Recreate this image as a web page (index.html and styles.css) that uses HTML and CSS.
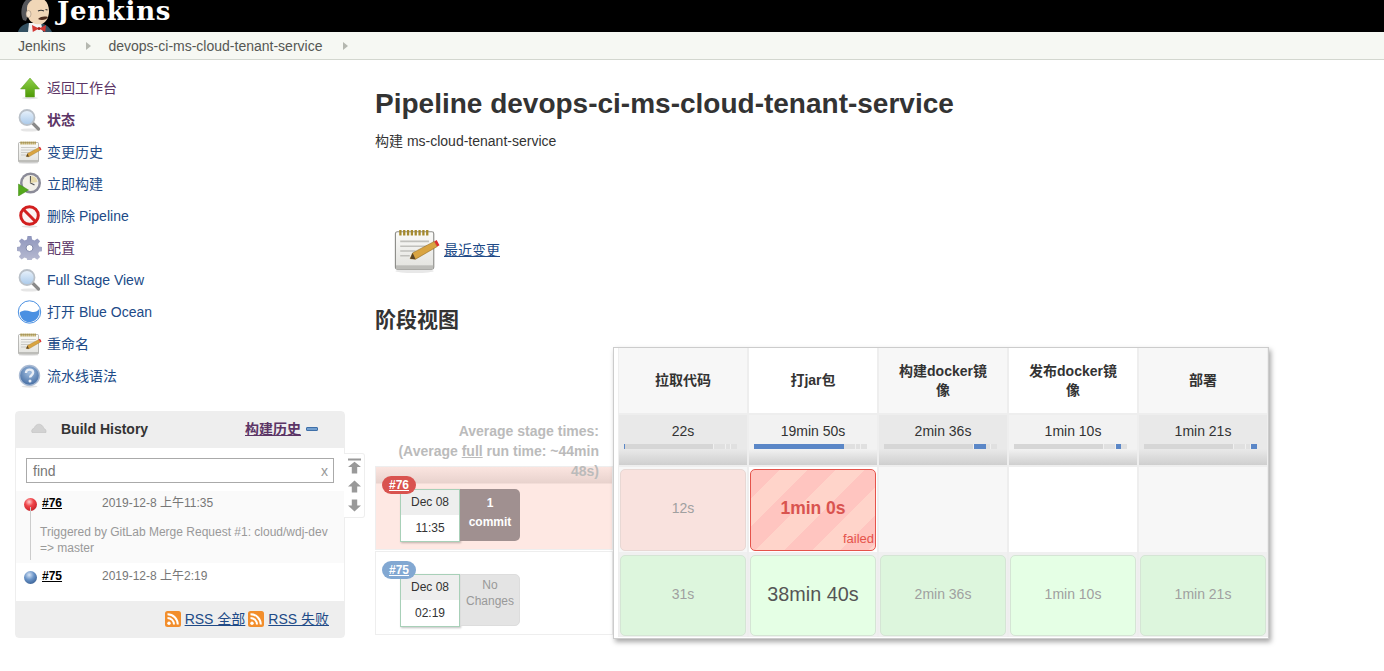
FILE: index.html
```html
<!DOCTYPE html>
<html lang="zh">
<head>
<meta charset="utf-8">
<title>devops-ci-ms-cloud-tenant-service [Jenkins]</title>
<link rel="stylesheet" href="styles.css">
</head>
<body>
<svg class="defs" width="0" height="0" aria-hidden="true">
  <defs>
    <linearGradient id="lensG" x1="0" y1="0" x2="0" y2="1"><stop offset="0" stop-color="#e9f2fb"/><stop offset="1" stop-color="#a9c9ea"/></linearGradient>
    <linearGradient id="greenG" x1="0" y1="0" x2="0" y2="1"><stop offset="0" stop-color="#8fd14a"/><stop offset="1" stop-color="#4e9a06"/></linearGradient>
    <linearGradient id="gearG" x1="0" y1="0" x2="0" y2="1"><stop offset="0" stop-color="#8f96bd"/><stop offset="1" stop-color="#b9bcd2"/></linearGradient>
    <linearGradient id="paperG" x1="0" y1="0" x2="0" y2="1"><stop offset="0" stop-color="#fbfbf9"/><stop offset="1" stop-color="#e2e2de"/></linearGradient>
    <radialGradient id="helpG" cx=".5" cy=".35" r=".7"><stop offset="0" stop-color="#a3bfe0"/><stop offset="1" stop-color="#3b659d"/></radialGradient>
    <symbol id="i-search" viewBox="0 0 24 24">
      <ellipse cx="12" cy="22" rx="9" ry="1.6" fill="#e6e6e6"/>
      <path d="M14 14l7 7" stroke="#8a8a8a" stroke-width="3.2" stroke-linecap="round"/>
      <circle cx="9.5" cy="9.5" r="7.5" fill="url(#lensG)" stroke="#b9c0c8" stroke-width="1.8"/>
    </symbol>
    <symbol id="i-notepad" viewBox="0 0 24 24">
      <ellipse cx="11" cy="23" rx="10" ry="1" fill="#e8e8e8"/>
      <rect x="1" y="2.500" width="20" height="19.500" rx="1" fill="url(#paperG)" stroke="#8f8f8b" stroke-width=".6"/>
      <rect x="1.300" y="20" width="19.400" height="2" fill="#bdbdb9"/>
      <path d="M3 3h16" stroke="#a58a2e" stroke-width="2.800" stroke-dasharray="1.200 .8"/>
      <path d="M3.500 7.500h15M3.500 10h14M3.500 12.500h8M3.500 15h5" stroke="#c0c0bc" stroke-width=".8"/>
      <path d="M8.700 16.500l1.300-3L21.300 7.500l1.500 2.700L11.500 16.800z" fill="#d9a441" stroke="#8f6518" stroke-width=".3"/>
      <path d="M8.700 16.500l1.300-3 1.500 3.300z" fill="#5a4526"/>
      <path d="M21.300 7.500l1.500 2.700 1.200-.7-1.500-2.700z" fill="#dc2f2f"/>
    </symbol>
    <symbol id="i-up" viewBox="0 0 24 24">
      <ellipse cx="12.500" cy="22" rx="8" ry="1.200" fill="#e2e2e2"/>
      <path d="M12.500 2L22 13h-5v8H8v-8H3z" fill="url(#greenG)" stroke="#5f9e22" stroke-width=".5"/>
    </symbol>
    <symbol id="i-clock" viewBox="0 0 24 24">
      <circle cx="13" cy="11" r="10.500" fill="#8b8b98"/>
      <circle cx="13" cy="11" r="8" fill="#f2f0e8"/>
      <path d="M13 4v7l4 2" fill="none" stroke="#555" stroke-width="1.200"/>
      <path d="M14 4a7 7 0 0 1 6 6l-7 1z" fill="#e6d9a8"/>
      <path d="M1 12l10 6-10 6z" fill="#54a81c" stroke="#3d8a10" stroke-width=".5"/>
    </symbol>
    <symbol id="i-no" viewBox="0 0 24 24">
      <ellipse cx="12" cy="22.500" rx="8" ry="1.200" fill="#e2e2e2"/>
      <circle cx="12" cy="11.500" r="8.800" fill="#fbf3f3" stroke="#d21f1f" stroke-width="3"/>
      <path d="M5.800 5.300l12.400 12.400" stroke="#d21f1f" stroke-width="3"/>
    </symbol>
    <symbol id="i-gear" viewBox="0 0 24 24">
      <path d="M10 0h4l.6 3.400 2.400 1 2.900-2 2.700 2.800-2 2.900 1 2.400 3.400.6v4l-3.400.6-1 2.400 2 2.900-2.800 2.700-2.900-2-2.300 1-.6 3.300h-4l-.6-3.400-2.400-1-2.900 2-2.700-2.800 2-2.900-1-2.300-3.400-.6v-4l3.400-.6 1-2.400-2-2.900 2.800-2.700 2.900 2 2.300-1z" fill="url(#gearG)"/>
      <circle cx="12" cy="12" r="3.500" fill="#fff" stroke="#8088ab"/>
    </symbol>
    <symbol id="i-ocean" viewBox="0 0 24 24">
      <circle cx="12" cy="12" r="11.200" fill="#fff" stroke="#4a90e2" stroke-width="1"/>
      <path d="M2.200 12.500c3.500-2.500 7-2.500 10.800-1 3.800 1.400 6.600.4 8.800-2.700 1.300 7.200-3.500 13.400-9.800 13.400-5.400 0-9.300-4.200-9.800-9.700z" fill="#4a90e2"/>
    </symbol>
    <symbol id="i-help" viewBox="0 0 24 24">
      <ellipse cx="12" cy="22.500" rx="8" ry="1.200" fill="#e2e2e2"/>
      <circle cx="12" cy="11.500" r="10" fill="url(#helpG)" stroke="#a9bad3" stroke-width="1.400"/>
      <path d="M8.500 9c0-2.200 1.600-3.400 3.600-3.400s3.500 1.200 3.500 3c0 2.600-3 2.600-3 5" fill="none" stroke="#e8eef6" stroke-width="2.400"/>
      <circle cx="12.500" cy="17" r="1.500" fill="#e8eef6"/>
    </symbol>
    <symbol id="i-rss" viewBox="0 0 16 16">
      <rect width="16" height="16" rx="2.500" fill="#f28e2c"/>
      <circle cx="4" cy="12.200" r="1.700" fill="#fff"/>
      <path d="M2.500 7a6.500 6.500 0 0 1 6.500 6.500M2.500 3.200a10.300 10.300 0 0 1 10.300 10.300" fill="none" stroke="#fff" stroke-width="2"/>
    </symbol>
  </defs>
</svg>

<header class="topbar">
  <svg class="butler" viewBox="0 0 36 32" aria-hidden="true">
    <path d="M2 32c1-5 6-8 10-9h13c4 1 9 4 11 9z" fill="#335061"/>
    <path d="M13 23h12l2 9H12z" fill="#f4f4f4"/>
    <path d="M9 5c2-4 5-6 9-6h9c4 2 6 7 6 12 0 5-2 11-7 13-6 1-11-1-13-5-2-4-5-8-4-14z" fill="#f0d6b7"/>
    <path d="M7 20C4 13 5 4 11-1h7c-4 2-7 5-7 9 0 3 0 6 1 8l-2 5z" fill="#55565a"/>
    <ellipse cx="12.500" cy="14" rx="2.500" ry="3.500" fill="#f5e2cc" stroke="#8b7a68" stroke-width=".5"/>
    <path d="M22 11c2-1 4-1 6 0M29.500 9.500l2 .5" fill="none" stroke="#333" stroke-width="1.200"/>
    <path d="M22 19c3-2.500 6-3 10-2-1 3-7 4-10 2z" fill="#4b2b1c"/>
    <path d="M23 28.500l-7-3.500.8 7zM23 28.500l7-3.500-.8 7z" fill="#d33833"/>
    <circle cx="23" cy="28.500" r="1.500" fill="#a81f1a"/>
  </svg>
  <span class="brand">Jenkins</span>
</header>

<nav class="crumbs">
  <a class="crumb">Jenkins</a><span class="crumb-arrow"></span>
  <a class="crumb">devops-ci-ms-cloud-tenant-service</a><span class="crumb-arrow"></span>
</nav>

<div class="page">
  <aside class="side">
    <ul class="tasks">
      <li class="task"><svg class="task-icon"><use href="#i-up"/></svg><a class="task-link visited">返回工作台</a></li>
      <li class="task"><svg class="task-icon"><use href="#i-search"/></svg><a class="task-link visited strong">状态</a></li>
      <li class="task"><svg class="task-icon"><use href="#i-notepad"/></svg><a class="task-link">变更历史</a></li>
      <li class="task"><svg class="task-icon"><use href="#i-clock"/></svg><a class="task-link">立即构建</a></li>
      <li class="task"><svg class="task-icon"><use href="#i-no"/></svg><a class="task-link">删除 Pipeline</a></li>
      <li class="task"><svg class="task-icon"><use href="#i-gear"/></svg><a class="task-link visited">配置</a></li>
      <li class="task"><svg class="task-icon"><use href="#i-search"/></svg><a class="task-link">Full Stage View</a></li>
      <li class="task"><svg class="task-icon"><use href="#i-ocean"/></svg><a class="task-link">打开 Blue Ocean</a></li>
      <li class="task"><svg class="task-icon"><use href="#i-notepad"/></svg><a class="task-link">重命名</a></li>
      <li class="task"><svg class="task-icon"><use href="#i-help"/></svg><a class="task-link">流水线语法</a></li>
    </ul>

    <section class="history">
      <div class="history-head">
        <svg class="cloud" viewBox="0 0 16 10" aria-hidden="true"><path d="M1 9.500C0 7 1.500 5.500 3 5.500 4 2 7 .5 9.500 1.500c2 .8 3 2.500 3.300 4 1.500.2 2.700 2 2.200 4z" fill="#d2d2d2" stroke="#bbb" stroke-width=".5"/></svg>
        <span class="history-title">Build History</span>
        <a class="history-trend">构建历史</a>
        <span class="history-minus"></span>
      </div>
      <div class="history-search"><div class="find"><span>find</span><span class="find-x">x</span></div></div>
      <div class="build build-odd">
        <div class="build-line">
          <span class="ball ball-red"></span><a class="build-no">#76</a><span class="build-date">2019-12-8 上午11:35</span>
        </div>
        <p class="build-desc">Triggered by GitLab Merge Request #1: cloud/wdj-dev<br>=&gt; master</p>
      </div>
      <div class="build build-even">
        <div class="build-line">
          <span class="ball ball-blue"></span><a class="build-no">#75</a><span class="build-date">2019-12-8 上午2:19</span>
        </div>
      </div>
      <div class="history-foot">
        <svg class="rss"><use href="#i-rss"/></svg><a class="rss-link">RSS 全部</a>
        <svg class="rss"><use href="#i-rss"/></svg><a class="rss-link">RSS 失败</a>
      </div>
      <div class="pager">
        <svg viewBox="0 0 12 14"><path d="M0 0h12v2H0zM6 3l6 5H8.500v6h-5V8H0z" fill="#999"/></svg>
        <svg viewBox="0 0 12 14"><path d="M6 2l6 5.500H8.500V13h-5V7.500H0z" fill="#999"/></svg>
        <svg viewBox="0 0 12 14"><path d="M6 12l6-5.500H8.500V1h-5v5.500H0z" fill="#999"/></svg>
      </div>
    </section>
  </aside>

  <main class="main">
    <h1 class="title">Pipeline devops-ci-ms-cloud-tenant-service</h1>
    <p class="desc">构建 ms-cloud-tenant-service</p>
    <div class="recent">
      <svg class="recent-icon"><use href="#i-notepad"/></svg><a class="recent-link">最近变更</a>
    </div>
    <h2 class="subtitle">阶段视图</h2>

    <section class="stage">
      <div class="avg-label">Average stage times:<br>(Average <u>full</u> run time: ~44min<br>48s)</div>
      <div class="run run-failed">
        <span class="badge badge-red">#76</span>
        <div class="run-body">
          <div class="stamp"><div class="stamp-date">Dec 08</div><div class="stamp-time">11:35</div></div>
          <div class="changes changes-dark"><b>1</b><span>commit</span></div>
        </div>
      </div>
      <div class="run">
        <span class="badge badge-blue">#75</span>
        <div class="run-body">
          <div class="stamp"><div class="stamp-date">Dec 08</div><div class="stamp-time">02:19</div></div>
          <div class="changes changes-none"><span>No</span><span>Changes</span></div>
        </div>
      </div>

      <div class="matrix">
        <div class="col alt head">拉取代码</div>
        <div class="col head">打jar包</div>
        <div class="col alt head">构建docker镜像</div>
        <div class="col head">发布docker镜像</div>
        <div class="col alt head">部署</div>

        <div class="col avg alt-avg"><span>22s</span><div class="meter"><i class="fill" style="left:0;width:1px"></i></div></div>
        <div class="col avg"><span>19min 50s</span><div class="meter"><i class="fill" style="left:0;width:90px"></i></div></div>
        <div class="col avg alt-avg"><span>2min 36s</span><div class="meter"><i class="fill" style="left:90px;width:12px"></i></div></div>
        <div class="col avg"><span>1min 10s</span><div class="meter"><i class="fill" style="left:102px;width:5px"></i></div></div>
        <div class="col avg alt-avg"><span>1min 21s</span><div class="meter"><i class="fill" style="left:107px;width:6px"></i></div></div>

        <div class="col alt cell"><div class="card card-abort">12s</div></div>
        <div class="col cell"><div class="card card-fail"><b>1min 0s</b><span class="failed">failed</span></div></div>
        <div class="col alt cell"></div>
        <div class="col cell"></div>
        <div class="col alt cell"></div>

        <div class="col cell row2"><div class="card card-ok-a">31s</div></div>
        <div class="col cell row2"><div class="card card-ok-b card-big">38min 40s</div></div>
        <div class="col cell row2"><div class="card card-ok-a">2min 36s</div></div>
        <div class="col cell row2"><div class="card card-ok-b">1min 10s</div></div>
        <div class="col cell row2"><div class="card card-ok-a">1min 21s</div></div>
      </div>
    </section>
  </main>
</div>
</body>
</html>
```

FILE: styles.css
```css
* { box-sizing: border-box; }
html, body { margin: 0; padding: 0; }
body {
  font-family: "Liberation Sans", "Noto Sans CJK SC", sans-serif;
  font-size: 14px;
  line-height: 16px;
  color: #333;
  background: #fff;
  min-height: 671px;
}
.defs { position: absolute; }
a { text-decoration: none; color: #204a87; }

.topbar {
  height: 32px;
  background: #000;
  display: flex;
  align-items: flex-start;
  padding-left: 16px;
  overflow: hidden;
}
.butler { width: 36px; height: 32px; flex: none; }
.brand {
  font-family: "DejaVu Serif", serif;
  font-weight: bold;
  font-size: 26px;
  line-height: 22px;
  letter-spacing: .7px;
  color: #fff;
  margin-left: 5px;
}

.crumbs {
  height: 28px;
  background: #f6f8f3;
  border-bottom: 1px solid #d3d7cf;
  display: flex;
  align-items: center;
  padding-left: 18px;
}
.crumb { color: #555753; font-size: 14px; }
.crumb-arrow {
  width: 0;
  height: 0;
  margin: 0 17px 0 21px;
  border-left: 5px solid #b5b8b0;
  border-top: 4px solid transparent;
  border-bottom: 4px solid transparent;
}

.page { display: flex; align-items: flex-start; }
.side { width: 375px; flex: none; padding: 12px 0 0 15px; }
.tasks { list-style: none; margin: 0; padding: 0 0 0 2px; }
.task { height: 32px; display: flex; align-items: center; gap: 5px; }
.task-icon { width: 25px; height: 24px; flex: none; }
.task-link { font-size: 14px; }
.visited { color: #5c3566; }
.strong { font-weight: bold; }

.history {
  position: relative;
  width: 330px;
  margin-top: 19px;
  background: #fff;
  border-radius: 4px;
  border: 1px solid #eee;
}
.history-head {
  height: 36px;
  background: #eee;
  display: flex;
  align-items: center;
  padding: 0 0 2px 15px;
}
.cloud { width: 16px; height: 10px; margin-top: -3px; }
.history-title { font-weight: bold; margin-left: 14px; flex: 1; color: #333; }
.history-trend { color: #5c3566; text-decoration: underline; font-weight: bold; }
.history-minus {
  width: 12px;
  height: 4px;
  margin: 0 26px 0 5px;
  background: #729fcf;
  border: 1px solid #3e6fa8;
  border-radius: 1px;
}
.history-search { padding: 10px 10px 8px; }
.find {
  height: 25px;
  border: 1px solid #aaa;
  display: flex;
  justify-content: space-between;
  align-items: center;
  padding: 0 5px 0 6px;
  color: #777;
}
.find-x { color: #999; }
.build { padding: 0 7px 0 8px; height: 31px; }
.build-even { padding-top: 1px; }
.build-odd { background: #fafafa; height: 72px; position: relative; }
.build-odd::before {
  content: "";
  position: absolute;
  left: 14px;
  top: 16px;
  bottom: 3px;
  width: 1px;
  background: #ccc;
}
.build-line { display: flex; align-items: center; height: 24px; font-size: 12px; }
.ball { width: 13px; height: 13px; border-radius: 50%; flex: none; margin-top: 2px; }
.ball-red { background: radial-gradient(circle at 40% 30%, #ffd0d0, #f0454a 35%, #b01018); }
.ball-blue { background: radial-gradient(circle at 40% 30%, #d6e4f5, #6a94c8 40%, #23487c); }
.build-no { color: #000; font-weight: bold; text-decoration: underline; margin-left: 5px; width: 60px; }
.build-date { color: #777; }
.build-desc { margin: 9px 0 0 16px; font-size: 12px; line-height: 16px; color: #999; }
.history-foot {
  margin-top: 7px;
  height: 36px;
  background: #eee;
  display: flex;
  align-items: center;
  justify-content: flex-end;
  padding-right: 15px;
}
.rss { width: 16px; height: 16px; flex: none; margin: 0 4px 0 3px; }
.rss-link { text-decoration: underline; color: #204a87; }
.pager {
  position: absolute;
  right: -21px;
  top: 41px;
  width: 21px;
  height: 65px;
  background: #fff;
  border: 1px solid #eee;
  border-left: 0;
  border-radius: 0 3px 3px 0;
  display: flex;
  flex-direction: column;
  align-items: center;
  gap: 4px;
  padding-top: 4px;
}
.pager svg { width: 13px; height: 16px; }

.main { flex: 1; min-width: 0; }
.title {
  font-size: 28px;
  line-height: 32px;
  font-weight: bold;
  color: #333;
  margin: 28px 0 0;
}
.desc { margin: 12px 0 0; line-height: 18px; }
.recent { display: flex; align-items: center; margin: 77px 0 0 18px; height: 46px; }
.recent-icon { width: 47px; height: 46px; flex: none; }
.recent-link { text-decoration: underline; margin-left: 4px; }
.subtitle { font-size: 21px; line-height: 28px; font-weight: bold; margin: 33px 0 0; color: #333; }

.stage { position: relative; margin-top: 14px; padding-top: 118px; width: 238px; }
.avg-label {
  position: absolute;
  right: 14px;
  top: 73px;
  width: 230px;
  text-align: right;
  font-weight: bold;
  color: #bbb;
  line-height: 20px;
  z-index: 2;
}
.run {
  position: relative;
  height: 84px;
  border: 1px solid #eee;
  background: #fff;
  margin-bottom: 1px;
}
.run-failed {
  background: linear-gradient(#fbe5e0 0, #e8d2cd 16px, #fee8e3 17px);
}
.run-body { display: flex; padding: 22px 0 0 24px; }
.stamp {
  width: 60px;
  height: 53px;
  border: 1px solid #a8d0b8;
  box-shadow: 1px 1px 2px rgba(0,0,0,.25);
  background: #fff;
  font-size: 12px;
  text-align: center;
  color: #333;
}
.stamp-date { height: 25px; line-height: 25px; background: #eee; }
.stamp-time { line-height: 26px; }
.changes {
  width: 60px;
  height: 52px;
  border-radius: 0 5px 5px 0;
  display: flex;
  flex-direction: column;
  align-items: center;
  font-size: 12px;
}
.changes-dark { background: #a09090; color: #fff; font-weight: bold; padding-top: 5px; line-height: 19px; }
.changes-dark span { font-weight: bold; }
.changes-none { background: #e4e4e4; border: 1px solid #ddd; color: #999; line-height: 16px; padding-top: 2px; }
.badge {
  position: absolute;
  left: 6px;
  top: 9px;
  width: 34px;
  height: 18px;
  border-radius: 9px;
  color: #fff;
  font-weight: bold;
  font-size: 12px;
  line-height: 18px;
  text-align: center;
  text-decoration: underline;
  z-index: 1;
}
.badge-red { background: #d9534f; }
.badge-blue { background: #82a8d2; }

.matrix {
  position: absolute;
  left: 238px;
  top: -1px;
  width: 656px;
  height: 292px;
  background: #fff;
  border: 1px solid #ccc;
  box-shadow: 2px 3px 5px rgba(0,0,0,.35);
  padding-left: 4px;
  display: grid;
  grid-template-columns: repeat(5, 130px);
  grid-template-rows: 67px 52px 85px 85px;
  z-index: 3;
}
.col { border-left: 1px solid #eee; border-right: 1px solid #eee; }
.alt { background: #f7f7f7; }
.head {
  display: flex;
  align-items: center;
  justify-content: center;
  text-align: center;
  padding: 0 18px;
  font-weight: bold;
  font-size: 14px;
  line-height: 19px;
  border-bottom: 2px solid #eee;
}
.avg {
  background: linear-gradient(#f2f2f2 0, #f2f2f2 34px, #cfcfcf 100%);
  text-align: center;
  font-size: 14px;
  padding-top: 7px;
  line-height: 18px;
  color: #333;
  border-bottom: 2px solid #eee;
}
.alt-avg { background: linear-gradient(#e9e9e9 0, #e9e9e9 34px, #cfcfcf 100%); }
.meter {
  position: relative;
  width: 113px;
  height: 5px;
  margin: 4px 0 0 5px;
  background: linear-gradient(to right, #d6d6d6 89px, #f0f0f0 89px, #f0f0f0 90px, #e0e0e0 90px, #e0e0e0 101px, #f0f0f0 101px, #f0f0f0 102px, #e0e0e0 102px, #e0e0e0 106px, #f0f0f0 106px, #f0f0f0 107px, #e0e0e0 107px);
}
.fill { position: absolute; top: 0; height: 5px; background: #5b87c7; display: block; }
.cell { padding: 2px 1px 1px; }
.row2 { background: #f0f0f0; padding-top: 3px; }
.card {
  height: 100%;
  padding-bottom: 4px;
  border: 1px solid #ddd;
  border-radius: 5px;
  display: flex;
  align-items: center;
  justify-content: center;
  font-size: 14px;
  color: #a0a0a0;
  position: relative;
}
.card-abort { background: #f9e2de; border-color: #e8d8d4; }
.card-fail {
  background: repeating-linear-gradient(135deg, #ffc5c0 0, #ffc5c0 20px, #ffd4ca 20px, #ffd4ca 40px);
  border: 1px solid #e5534b;
  color: #d9534f;
  font-size: 17.5px;
}
.failed { position: absolute; right: 1px; bottom: 3px; font-size: 13px; line-height: 16px; color: #e5534b; }
.card-ok-a { background: #ddf6dd; border-color: #d5e5d5; }
.card-ok-b { background: #e5ffe5; border-color: #d5e5d5; }
.card-big { font-size: 19.8px; color: #555; }
```
